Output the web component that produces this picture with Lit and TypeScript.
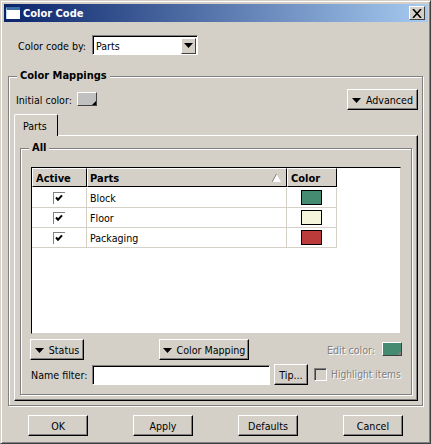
import { LitElement, html, css } from "lit";
import { customElement } from "lit/decorators.js";

const arrow = html`<svg class="arrow" width="9" height="5" viewBox="0 0 9 5"><path d="M0 0h9L4.5 5z" fill="#000"/></svg>`;

@customElement("app-root")
export class AppRoot extends LitElement {
  static styles = css`
    :host { display: block; width: 432px; height: 444px; background: #d4d0c8; font: 10.6px "DejaVu Sans Condensed", "DejaVu Sans", sans-serif; color: #000; }
    * { box-sizing: border-box; }
    .window { width: 431px; height: 444px; background: #d4d0c8; padding: 3px 2px 3px 3px; display: flex; flex-direction: column;
      border: 1px solid; border-color: #d4d0c8 #404040 #404040 #d4d0c8; box-shadow: inset 1px 1px #fff, inset -1px -1px #808080; }
    .title { height: 18px; flex: none; display: flex; align-items: center; padding: 0 3px 0 2px; color: #fff; font-weight: bold; font-size: 11px;
      background: linear-gradient(90deg, #0a246a, #a6caf0); }
    .appicon { width: 14px; height: 12px; background: #fff; border-top: 3px solid #3a6ea5; border-left: 1px solid #c0d8f0; margin-right: 3px; }
    .close { margin-left: auto; width: 16px; height: 14px; background: #d4d0c8; border: 1px solid; border-color: #fff #404040 #404040 #fff; display: flex; align-items: center; justify-content: center; }
    .top { display: flex; align-items: center; height: 20px; margin: 13px 0 0 14px; }
    .toplabel { width: 74px; padding-top: 2px; white-space: nowrap; }
    .combo { width: 106px; height: 20px; background: #fff; border: 1px solid; border-color: #808080 #fff #fff #808080; box-shadow: inset 1px 1px #000; display: flex; align-items: center; padding: 2px 1px 1px 3px; }
    .combo span { flex: 1; }
    .combobtn { width: 15px; height: 16px; background: #d4d0c8; border: 1px solid; border-color: #fff #404040 #404040 #fff; display: flex; align-items: center; justify-content: center; }
    .group { position: relative; border: 1px solid #808080; box-shadow: 1px 1px #fff, inset 1px 1px #fff; }
    .legend { position: absolute; top: -8px; left: 8px; padding: 0 3px; background: #d4d0c8; font-weight: bold; font-size: 11px; line-height: 14px; }
    .mappings { margin: 21px 0 0 4px; width: 415px; height: 330px; flex: none; padding: 12px 4px 0 5px; }
    .init { display: flex; align-items: center; height: 21px; }
    .initlabel { width: 63px; padding-left: 2px; padding-top: 1px; white-space: nowrap; }
    .swatchbtn { display: block; width: 20px; height: 14px; margin-top: -1px; background: #c0c0c0; border: 1px solid; border-color: #fff #404040 #404040 #fff; position: relative; }
    .corner { position: absolute; right: 0; bottom: 0; width: 0; height: 0; border: 2px solid transparent; border-right-color: #000; border-bottom-color: #000; }
    .btn { height: 21px; padding-top: 1px; display: flex; align-items: center; justify-content: center; gap: 5px; background: #d4d0c8; border: 1px solid; border-color: #fff #000 #000 #fff; box-shadow: inset -1px -1px #808080; white-space: nowrap; }
    .adv { width: 71px; margin-left: auto; }
    .tabs { height: 22px; margin-top: 4px; display: flex; }
    .tab { width: 44px; height: 22px; padding: 5px 0 0 8px; border: 1px solid; border-bottom: 0; border-color: #fff #000 #000 #fff; border-radius: 2px 2px 0 0; background: #d4d0c8; position: relative; z-index: 1; }
    .panel { width: 404px; height: 266px; border: 1px solid; border-color: #fff #000 #000 #fff; box-shadow: inset -1px -1px #808080; padding: 12px 5px 0 5px; margin-top: -1px; }
    .all { height: 247px; padding: 18px 10px 0 10px; }
    .table { height: 167px; background: #fff; border: 1px solid; border-color: #000 #d4d0c8 #d4d0c8 #000; }
    .hdr, .row { display: grid; grid-template-columns: 55px 200px 50px; width: 305px; }
    .hdr { margin-bottom: 1px; }
    .hdr > div { height: 19px; font-weight: bold; font-size: 11px; background: #d4d0c8; border: 1px solid; border-color: #fff #000 #000 #fff; padding: 3px 0 0 3px; position: relative; }
    .hdr > .partshead { padding-left: 2px; }
    .sort { position: absolute; right: 5px; top: 5px; }
    .row > div { height: 20px; border-right: 1px solid #d4d0c8; border-bottom: 1px solid #d4d0c8; display: flex; align-items: center; }
    .row .name { padding-left: 3px; }
    .row .c { justify-content: center; }
    .row .chk { padding-right: 1px; }
    .check { width: 12px; height: 12px; display: block; }
    .sw { width: 21px; height: 15px; border: 1px solid #000; }
    .actions { display: flex; align-items: center; margin: 5px -1px 0 -1px; height: 21px; }
    .status { width: 54px; margin-right: 75px; }
    .mapbtn { width: 90px; }
    .edit { margin-left: auto; display: flex; align-items: center; gap: 7px; color: #808080; text-shadow: 1px 1px #fff; }
    .editsw { width: 20px; height: 14px; margin-top: -2px; background: #448b72; border: 1px solid; border-color: #fff #404040 #404040 #fff; position: relative; }
    .editsw .corner { border-right-color: #808080; border-bottom-color: #808080; }
    .filter { display: flex; align-items: center; margin-top: 4px; height: 21px; }
    .filter > * { flex: none; }
    .filterlabel { width: 61px; padding-top: 1px; white-space: nowrap; }
    .input { width: 178px; height: 20px; background: #fff; border: 1px solid; border-color: #808080 #fff #fff #808080; box-shadow: inset 1px 1px #000; }
    .tip { width: 34px; margin-left: 4px; }
    .hl { display: flex; align-items: center; gap: 4px; margin-left: 6px; color: #808080; text-shadow: 1px 1px #fff; white-space: nowrap; font-size: 10.2px; }
    .hlbox { width: 13px; height: 13px; margin-top: -1px; border: 1px solid; border-color: #808080 #fff #fff #808080; box-shadow: inset 1px 1px #404040; }
    .bottom { display: flex; padding: 9px 0 0 24px; gap: 45px; }
    .bottom .btn { width: 60px; }
  `;
  private check() {
    return html`<svg class="check" viewBox="0 0 12 12"><rect width="12" height="12" fill="#fff"/><path d="M0 12V0h12" fill="none" stroke="#808080" stroke-width="2"/><path d="M3 5.5l2 2.2 4-4.4" fill="none" stroke="#000" stroke-width="2"/></svg>`;
  }
  private row(name: string, color: string) {
    return html`<div class="row"><div class="c chk">${this.check()}</div><div class="name">${name}</div><div class="c"><div class="sw" style="background:${color}"></div></div></div>`;
  }
  render() {
    return html`<div class="window">
      <div class="title"><div class="appicon"></div>Color Code
        <div class="close"><svg width="10" height="9" viewBox="0 0 10 9"><path d="M1 0l8 9M9 0L1 9" stroke="#000" stroke-width="1.6"/></svg></div></div>
      <div class="top"><span class="toplabel">Color code by:</span><div class="combo"><span>Parts</span><div class="combobtn">${arrow}</div></div></div>
      <div class="group mappings"><div class="legend">Color Mappings</div>
        <div class="init"><span class="initlabel">Initial color:</span><div class="swatchbtn"><i class="corner"></i></div><div class="btn adv">${arrow}Advanced</div></div>
        <div class="tabs"><div class="tab">Parts</div></div>
        <div class="panel">
          <div class="group all"><div class="legend">All</div>
            <div class="table">
              <div class="hdr"><div>Active</div><div class="partshead">Parts<svg class="sort" width="9" height="8" viewBox="0 0 9 8"><path d="M4.5 0L9 8H0z" fill="#fff"/><path d="M4.5 0L0 8" stroke="#808080" fill="none"/></svg></div><div>Color</div></div>
              ${this.row("Block", "#448b72")}${this.row("Floor", "#f5f5dc")}${this.row("Packaging", "#bb3b3b")}
            </div>
            <div class="actions"><div class="btn status">${arrow}Status</div><div class="btn mapbtn">${arrow}Color Mapping</div>
              <div class="edit">Edit color:<div class="editsw"><i class="corner"></i></div></div></div>
            <div class="filter"><span class="filterlabel">Name filter:</span><div class="input"></div><div class="btn tip">Tip...</div><div class="hl"><div class="hlbox"></div>Highlight items</div></div>
          </div>
        </div>
      </div>
      <div class="bottom"><div class="btn">OK</div><div class="btn">Apply</div><div class="btn">Defaults</div><div class="btn">Cancel</div></div>
    </div>`;
  }
}
